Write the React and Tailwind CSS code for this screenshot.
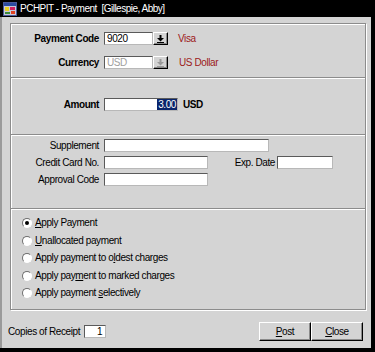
import React from "react";

const sunken = "border border-t-[#5a5a5a] border-l-[#5a5a5a] border-b-[#b8b8b8] border-r-[#b8b8b8]";
const raised = "border border-t-white border-l-white border-b-black border-r-black shadow-[inset_-1px_-1px_0_#8a8a8a]";

const TitleIcon = () => (
    <svg width="14" height="14" viewBox="0 0 14 14">
        <rect x="0.5" y="0.5" width="13" height="13" fill="#c8c8d8" stroke="#4a5a9a" />
        <rect x="1" y="1" width="12" height="3" fill="#2a4aa0" />
        <rect x="2" y="5" width="4" height="4" fill="#e8d020" />
        <rect x="7" y="5" width="5" height="3" fill="#d02060" />
        <rect x="2" y="10" width="5" height="2" fill="#3a8a3a" />
        <rect x="8" y="9" width="4" height="3" fill="#e04020" />
    </svg>
);

const DropArrow = ({ disabled }) => (
    <svg width="7" height="8" viewBox="0 0 7 8" fill={disabled ? "#9a9a9a" : "#000"}>
        <rect x="2.5" y="0" width="2" height="3" />
        <polygon points="0,3 7,3 3.5,6.5" />
        <rect x="0" y="7" width="7" height="1" />
    </svg>
);

const Field = ({ w, children, className = "" }) => (
    <div className={`h-[13px] bg-white ${sunken} flex items-center ${className}`} style={{ width: w }}>
        {children}
    </div>
);

const Label = ({ children, bold }) => (
    <div className={`w-[88px] shrink-0 text-right ${bold ? "font-bold" : ""}`}>{children}</div>
);

const Radio = ({ checked, children }) => (
    <div className="flex h-[14px] items-center">
        <div className="flex h-[10px] w-[10px] items-center justify-center rounded-full border border-t-[#6e6e6e] border-l-[#6e6e6e] border-b-white border-r-white bg-white">
            {checked && <div className="h-[4px] w-[4px] rounded-full bg-black" />}
        </div>
        <span className="ml-[3px]">{children}</span>
    </div>
);

const Btn = ({ children }) => (
    <button className={`flex h-[19px] w-[52px] items-center justify-center bg-[#d4d4d4] ${raised}`}>
        {children}
    </button>
);

export default function App() {
    return (
        <div
            className="flex h-[352px] w-[375px] flex-col bg-black text-[10px] leading-none tracking-[-0.4px] text-black"
            style={{ fontFamily: '"Liberation Sans", Arial, sans-serif' }}
        >
            {/* Title bar */}
            <div className="flex h-[17px] shrink-0 items-center pl-[3px] text-white">
                <TitleIcon />
                <span className="ml-[3px] text-[10px] tracking-[-0.5px]">PCHPIT - Payment&nbsp; [Gillespie, Abby]</span>
            </div>

            {/* Window body */}
            <div className="mb-[4px] mr-[4px] flex flex-1 flex-col border-l-2 border-[#9a9a9a] bg-[#d4d4d4]">
                <div className="ml-[8px] mr-[5px] mt-[6px] flex h-[287px] flex-col border border-[#8c8c8c] shadow-[inset_1px_1px_0_#fff,1px_1px_0_#fff]">
                    {/* Payment code / currency */}
                    <div className="flex h-[53px] flex-col gap-[11px] pt-[8px]">
                        <div className="flex items-center">
                            <Label bold>Payment Code</Label>
                            <Field w={49} className="ml-[5px]">
                                <span className="pl-[2px]">9020</span>
                            </Field>
                            <div className={`flex h-[13px] w-[15px] items-center justify-center bg-[#d4d4d4] ${raised}`}>
                                <DropArrow />
                            </div>
                            <span className="ml-[10px] text-[#9c1a1a]">Visa</span>
                        </div>
                        <div className="flex items-center">
                            <Label bold>Currency</Label>
                            <Field w={49} className="ml-[5px] bg-[#f4f4f4]">
                                <span className="pl-[2px] text-[#a0a0a0]">USD</span>
                            </Field>
                            <div className={`flex h-[13px] w-[15px] items-center justify-center bg-[#d4d4d4] ${raised}`}>
                                <DropArrow disabled />
                            </div>
                            <span className="ml-[11px] text-[#9c1a1a]">US Dollar</span>
                        </div>
                    </div>

                    {/* Amount */}
                    <div className="flex h-[57px] flex-col border-t border-[#8c8c8c] pt-[20px] shadow-[inset_0_1px_0_#fff]">
                        <div className="flex items-center">
                            <Label bold>Amount</Label>
                            <Field w={74} className="ml-[5px] justify-end">
                                <span className="flex h-full items-center bg-[#0a246a] px-[1px] text-white">3.00</span>
                            </Field>
                            <span className="ml-[5px] font-bold">USD</span>
                        </div>
                    </div>

                    {/* Supplement / card */}
                    <div className="flex h-[74px] flex-col gap-[4px] border-t border-[#8c8c8c] pt-[4px] shadow-[inset_0_1px_0_#fff]">
                        <div className="flex items-center">
                            <Label>Supplement</Label>
                            <Field w={165} className="ml-[5px]" />
                        </div>
                        <div className="flex items-center">
                            <Label>Credit Card No.</Label>
                            <Field w={104} className="ml-[5px]" />
                            <span className="ml-[26px] w-[41px] text-right">Exp. Date</span>
                            <Field w={56} className="ml-[2px]" />
                        </div>
                        <div className="flex items-center">
                            <Label>Approval Code</Label>
                            <Field w={104} className="ml-[5px]" />
                        </div>
                    </div>

                    {/* Payment options */}
                    <div className="flex flex-1 flex-col gap-[3.5px] border-t border-[#8c8c8c] pl-[11px] pt-[7px] shadow-[inset_0_1px_0_#fff]">
                        <Radio checked><span className="underline">A</span>pply Payment</Radio>
                        <Radio><span className="underline">U</span>nallocated payment</Radio>
                        <Radio>Apply payment to o<span className="underline">l</span>dest charges</Radio>
                        <Radio>Apply pay<span className="underline">m</span>ent to marked charges</Radio>
                        <Radio>Apply payment <span className="underline">s</span>electively</Radio>
                    </div>
                </div>

                {/* Footer */}
                <div className="mt-[12px] flex items-center pl-[6px] pr-[8px]">
                    <span>Copies of Receipt</span>
                    <Field w={22} className="ml-[4px] justify-end">
                        <span className="pr-[3px]">1</span>
                    </Field>
                    <div className="ml-auto flex">
                        <Btn><span className="underline">P</span>ost</Btn>
                        <Btn><span className="underline">C</span>lose</Btn>
                    </div>
                </div>
            </div>
        </div>
    );
}
